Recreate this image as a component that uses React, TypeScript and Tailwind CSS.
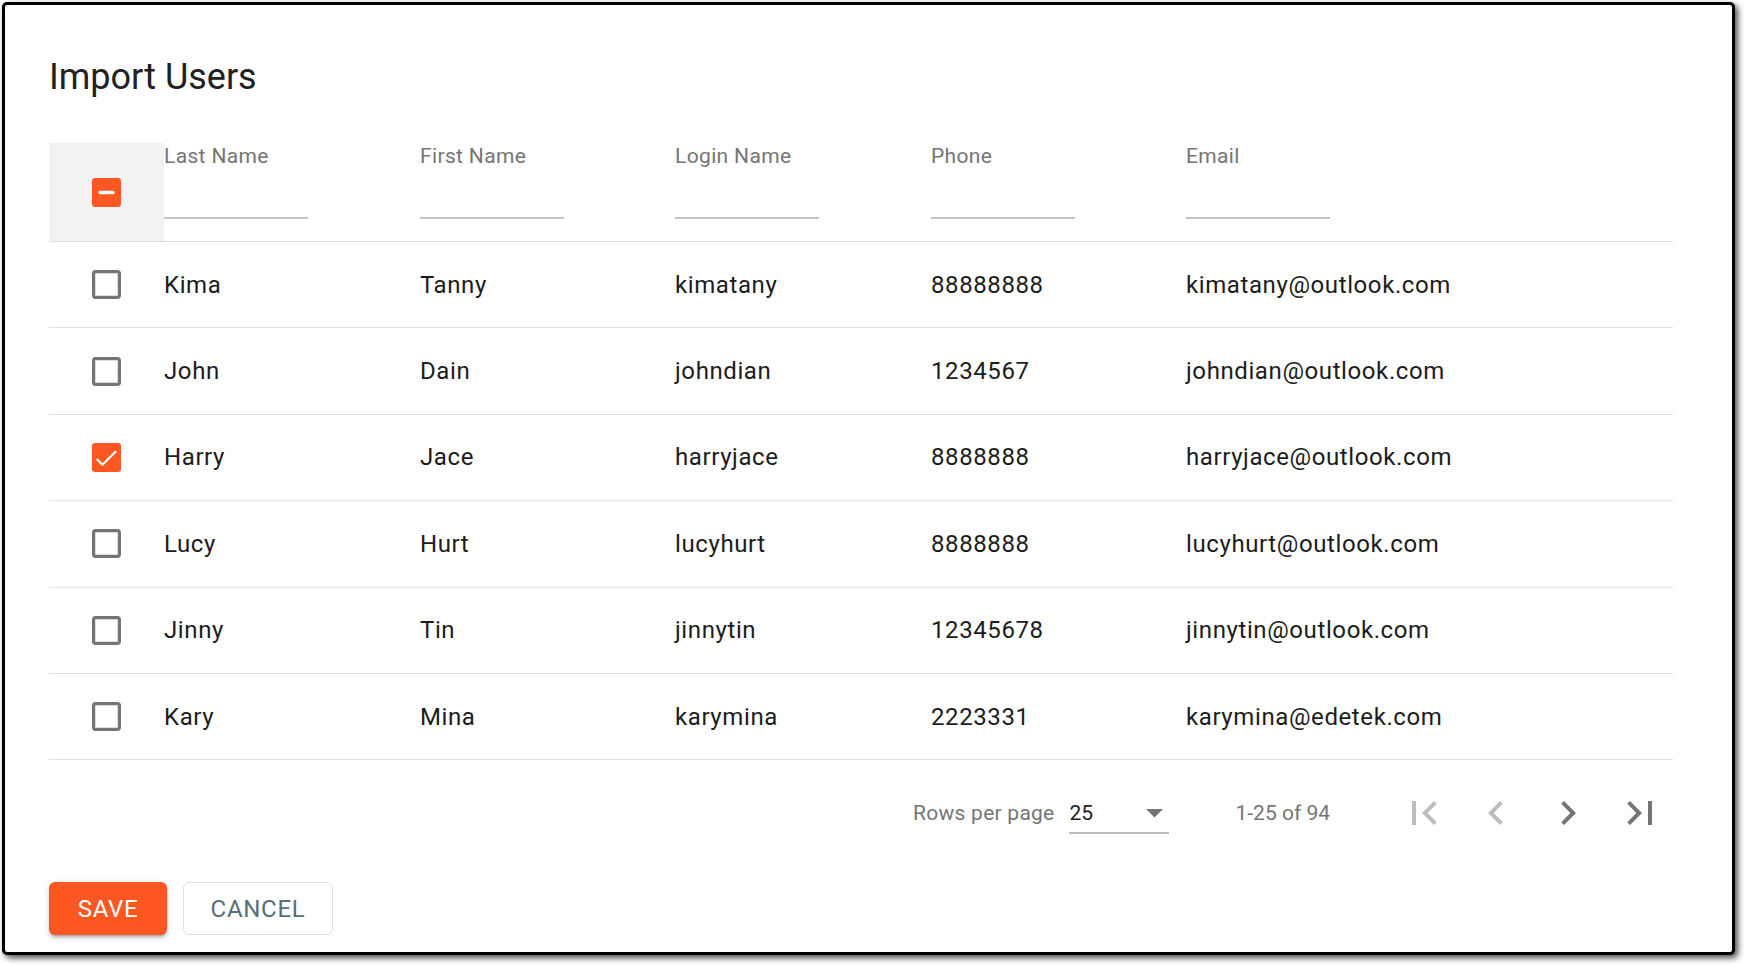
import React from "react";

type User = {
  lastName: string;
  firstName: string;
  login: string;
  phone: string;
  email: string;
  selected?: boolean;
};

const users: User[] = [
  { lastName: "Kima", firstName: "Tanny", login: "kimatany", phone: "88888888", email: "kimatany@outlook.com" },
  { lastName: "John", firstName: "Dain", login: "johndian", phone: "1234567", email: "johndian@outlook.com" },
  { lastName: "Harry", firstName: "Jace", login: "harryjace", phone: "8888888", email: "harryjace@outlook.com", selected: true },
  { lastName: "Lucy", firstName: "Hurt", login: "lucyhurt", phone: "8888888", email: "lucyhurt@outlook.com" },
  { lastName: "Jinny", firstName: "Tin", login: "jinnytin", phone: "12345678", email: "jinnytin@outlook.com" },
  { lastName: "Kary", firstName: "Mina", login: "karymina", phone: "2223331", email: "karymina@edetek.com" },
];

const columns = ["Last Name", "First Name", "Login Name", "Phone", "Email"];

type BoxState = "off" | "on" | "some";

const Checkbox: React.FC<{ state: BoxState }> = ({ state }) => {
  if (state === "off") {
    return (
      <svg width="29" height="29" viewBox="3 3 18 18" className="text-[#757575]">
        <path
          fill="currentColor"
          d="M19 5v14H5V5h14m0-2H5c-1.11 0-2 .9-2 2v14c0 1.1.89 2 2 2h14c1.1 0 2-.9 2-2V5c0-1.1-.9-2-2-2z"
        />
      </svg>
    );
  }
  return (
    <svg width="29" height="29" viewBox="3 3 18 18">
      <rect x="3" y="3" width="18" height="18" rx="2" fill="#ff5722" />
      {state === "on" ? (
        <path d="M5.9 12.9l3.6 3.6 8.4-8.4" fill="none" stroke="#fff" strokeWidth="1.4" />
      ) : (
        <rect x="7" y="10.9" width="10" height="2.2" rx="1" fill="#fff" />
      )}
    </svg>
  );
};

const PageIcon: React.FC<{ d: string; disabled?: boolean }> = ({ d, disabled }) => (
  <svg width="48" height="48" viewBox="0 0 24 24">
    <path d={d} fill={disabled ? "#bdbdbd" : "#757575"} />
  </svg>
);

const gridCols = "grid grid-cols-[115px_256px_255px_256px_255px_1fr]";

export default function App() {
  return (
    <div className="w-[1744px] h-[966px] bg-white overflow-hidden font-[Roboto,sans-serif]">
      <div className="ml-[2px] mt-[2px] w-[1733px] h-[953px] border-[3px] border-black rounded-[5px] bg-white shadow-[3px_3px_6px_rgba(0,0,0,0.7)] pl-[44px]">
        {/* Title */}
        <h1 className="mt-[54px] text-[36px] leading-[36px] font-normal text-[#212121]">Import Users</h1>

        <div className="mt-[48px] w-[1624px]">
          {/* Header with filter inputs */}
          <div className={`${gridCols} h-[99px] border-b border-[#e0e0e0]`}>
            <div className="bg-[#f2f2f2] flex items-center justify-center">
              <Checkbox state="some" />
            </div>
            {columns.map((col) => (
              <div key={col} className="pt-[1px]">
                <div className="text-[21px] leading-[24px] tracking-[0.35px] text-[#757575]">{col}</div>
                <div className="mt-[49px] w-[144px] h-[2px] bg-[#c4c4c4]" />
              </div>
            ))}
          </div>

          {/* Rows */}
          {users.map((u) => (
            <div
              key={u.login}
              className={`${gridCols} h-[86.4px] items-center border-b border-[#e0e0e0] text-[24px] tracking-[0.6px] text-[#1c1c1c]`}
            >
              <div className="flex justify-center">
                <Checkbox state={u.selected ? "on" : "off"} />
              </div>
              <div>{u.lastName}</div>
              <div>{u.firstName}</div>
              <div>{u.login}</div>
              <div>{u.phone}</div>
              <div>{u.email}</div>
            </div>
          ))}

          {/* Pagination */}
          <div className="flex items-center justify-end h-[106px] pr-[9px] text-[21px] leading-[24px] text-[#757575]">
            <span className="tracking-[0.25px]">Rows per page</span>
            <div className="ml-[15px] w-[100px] pt-[9px] pb-[7px] border-b-2 border-[#bdbdbd] flex items-center justify-between text-[#212121]">
              <span>25</span>
              <svg width="17" height="9" viewBox="0 0 17 9" className="mr-[6px]">
                <path d="M0 0h17L8.5 8.5z" fill="#757575" />
              </svg>
            </div>
            <span className="ml-[66px]">1-25 of 94</span>
            <div className="ml-[70px] flex gap-[24px]">
              <PageIcon disabled d="M18.41 16.59L13.82 12l4.59-4.59L17 6l-6 6 6 6zM6 6h2v12H6z" />
              <PageIcon disabled d="M15.41 7.41L14 6l-6 6 6 6 1.41-1.41L10.83 12z" />
              <PageIcon d="M10 6L8.59 7.41 13.17 12l-4.58 4.59L10 18l6-6z" />
              <PageIcon d="M5.59 7.41L10.18 12l-4.59 4.59L7 18l6-6-6-6zM16 6h2v12h-2z" />
            </div>
          </div>
        </div>

        {/* Actions */}
        <div className="mt-[16px] flex gap-[16px]">
          <button className="w-[118px] h-[53px] rounded-[6px] bg-[#ff5722] text-white text-[24px] font-normal tracking-[0.7px] shadow-[0_3px_2px_-2px_rgba(0,0,0,0.2),0_3px_3px_0_rgba(0,0,0,0.14),0_2px_8px_0_rgba(0,0,0,0.12)]">
            SAVE
          </button>
          <button className="w-[150px] h-[53px] rounded-[6px] border border-[#e0e0e0] text-[#546e7a] text-[24px] font-normal tracking-[0.7px]">
            CANCEL
          </button>
        </div>
      </div>
    </div>
  );
}
